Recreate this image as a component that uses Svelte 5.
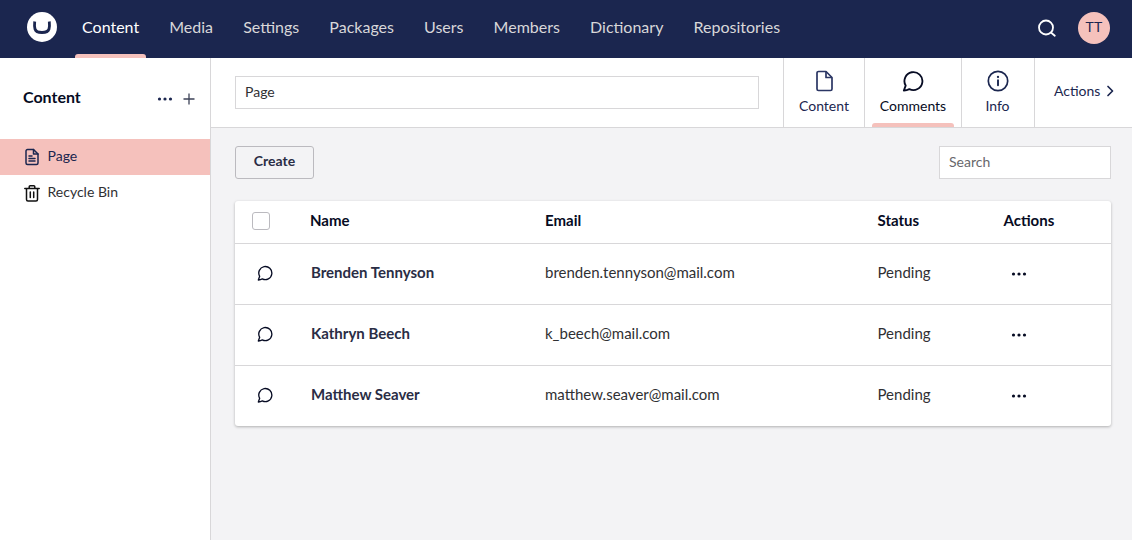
<script lang="ts">
  const navItems = ['Content', 'Media', 'Settings', 'Packages', 'Users', 'Members', 'Dictionary', 'Repositories'];
  const comments = [
    { name: 'Brenden Tennyson', email: 'brenden.tennyson@mail.com', status: 'Pending' },
    { name: 'Kathryn Beech', email: 'k_beech@mail.com', status: 'Pending' },
    { name: 'Matthew Seaver', email: 'matthew.seaver@mail.com', status: 'Pending' }
  ];
</script>

{#snippet bubble(size: number)}
  <svg width={size} height={size} viewBox="0 0 24 24" fill="none" stroke="currentColor" stroke-width="2" stroke-linecap="round" stroke-linejoin="round">
    <path d="M2 22.500l2-5.500A9.800 9.800 0 1 1 8 20.800c-1.800.8-4 1.400-6 1.700z" />
  </svg>
{/snippet}

{#snippet dots()}
  <svg width="16" height="4" viewBox="0 0 16 4" fill="currentColor">
    <circle cx="2.500" cy="2" r="1.600" /><circle cx="8" cy="2" r="1.600" /><circle cx="13.500" cy="2" r="1.600" />
  </svg>
{/snippet}

<div class="app">
  <header class="topbar">
    <div class="logo">
      <svg width="30" height="30" viewBox="0 0 30 30">
        <circle cx="15" cy="15" r="15" fill="#fff" />
        <path d="M7.700 9.500c-.3 3-.3 5.500.3 7.500.7 2.500 3 3.500 7 3.500s6.300-1 7-3.500c.6-2 .6-4.500.3-7.500" fill="none" stroke="#1b264f" stroke-width="2.800" />
      </svg>
    </div>
    <nav class="mainnav">
      {#each navItems as item, i}
        <span class="navitem" class:active={i === 0}>{item}</span>
      {/each}
    </nav>
    <div class="topright">
      <svg class="search" width="20" height="20" viewBox="0 0 20 20" fill="none" stroke="#fff" stroke-width="1.800" stroke-linecap="round">
        <circle cx="9" cy="9.500" r="7" /><path d="M14.200 14.700l3.600 3" />
      </svg>
      <div class="avatar">TT</div>
    </div>
  </header>

  <div class="main">
    <aside class="sidebar">
      <div class="side-head">
        <span class="side-title">Content</span>
        <span class="side-actions">
          {@render dots()}
          <svg width="12" height="12" viewBox="0 0 12 12" stroke="#3c4257" stroke-width="1.300"><path d="M6 .500v11M.500 6h11" /></svg>
        </span>
      </div>
      <div class="tree-item selected">
        <svg width="18" height="18" viewBox="0 0 18 18" fill="none" stroke="#1b264f" stroke-width="1.500" stroke-linejoin="round" stroke-linecap="round">
          <path d="M3 3a1.500 1.500 0 0 1 1.500-1.500h6L15 6v9a1.500 1.500 0 0 1-1.500 1.500h-9A1.500 1.500 0 0 1 3 15z" />
          <path d="M10.500 1.500V6H15M6 8h3M6 10.500h6M6 13h6" />
        </svg>
        <span>Page</span>
      </div>
      <div class="tree-item">
        <svg width="18" height="18" viewBox="0 0 18 18" fill="none" stroke="#111" stroke-width="1.500" stroke-linejoin="round" stroke-linecap="round">
          <path d="M1.800 4.500h14.400M6.200 4.500V2.700a1 1 0 0 1 1-1h3.600a1 1 0 0 1 1 1v1.800M3.500 4.500v11a1.500 1.500 0 0 0 1.500 1.500h8a1.500 1.500 0 0 0 1.500-1.500v-11M7.300 8v5.500M10.700 8v5.500" />
        </svg>
        <span>Recycle Bin</span>
      </div>
    </aside>

    <section class="workspace">
      <div class="ws-head">
        <div class="name-wrap"><input class="name-input" value="Page" /></div>
        <div class="tab content-tab">
          <svg width="22" height="22" viewBox="0 0 22 22" fill="none" stroke="#2b3664" stroke-width="1.700" stroke-linejoin="round">
            <path d="M4 3a1.500 1.500 0 0 1 1.500-1.500h7.500L19 7.500V19a1.500 1.500 0 0 1-1.500 1.500h-12A1.500 1.500 0 0 1 4 19z" />
            <path d="M13 1.500v6h6" />
          </svg>
          <span>Content</span>
        </div>
        <div class="tab comments-tab active">
          <span class="tab-icon">{@render bubble(22)}</span>
          <span>Comments</span>
        </div>
        <div class="tab info-tab">
          <svg width="22" height="22" viewBox="0 0 22 22" fill="none" stroke="#1b264f" stroke-width="1.700" stroke-linecap="round">
            <circle cx="11" cy="11" r="9.700" /><path d="M11 10.200v5" stroke-width="1.900" /><path d="M11 6.800v.3" stroke-width="2.200" />
          </svg>
          <span>Info</span>
        </div>
        <div class="tab actions-tab">
          <span>Actions</span>
          <svg width="8" height="12" viewBox="0 0 8 12" fill="none" stroke="#1b264f" stroke-width="1.700" stroke-linecap="round" stroke-linejoin="round"><path d="M2 1.500l4.500 4.500L2 10.500" /></svg>
        </div>
      </div>

      <div class="ws-body">
        <div class="toolbar">
          <button class="create">Create</button>
          <input class="search-input" placeholder="Search" />
        </div>

        <div class="table">
          <div class="row head">
            <div class="c-check"><span class="checkbox"></span></div>
            <div class="c-name">Name</div>
            <div class="c-email">Email</div>
            <div class="c-status">Status</div>
            <div class="c-actions">Actions</div>
          </div>
          {#each comments as c}
            <div class="row">
              <div class="c-check icon">{@render bubble(16)}</div>
              <div class="c-name strong">{c.name}</div>
              <div class="c-email">{c.email}</div>
              <div class="c-status">{c.status}</div>
              <div class="c-actions more">{@render dots()}</div>
            </div>
          {/each}
        </div>
      </div>
    </section>
  </div>
</div>

<style>
  :global(body) { margin: 0; background: #fff; }
  .app {
    width: 1132px; height: 540px; overflow: hidden; display: flex; flex-direction: column;
    font-family: Lato, "Liberation Sans", sans-serif; font-size: 15px; color: #1b264f;
  }

  .topbar { height: 58px; flex: none; background: #1b264f; display: flex; align-items: center; }
  .logo { width: 30px; height: 30px; margin: 0 0 4px 27px; flex: none; }
  .logo svg { display: block; }
  .mainnav { display: flex; height: 100%; margin-left: 10px; }
  .navitem {
    position: relative; padding: 0 15.05px; font-size: 16px; line-height: 53px; color: #d8d7d9;
  }
  .navitem.active { color: #fff; }
  .navitem.active::after {
    content: ''; position: absolute; left: 8px; right: 8px; bottom: 0; height: 4px;
    background: #f5c1bc; border-radius: 3px 3px 0 0;
  }
  .topright { margin-left: auto; display: flex; align-items: center; gap: 21px; padding: 0 22px 2px 0; }
  .search { display: block; }
  .avatar {
    width: 32px; height: 32px; border-radius: 50%; background: #f5c1bc; color: #1b264f;
    font-size: 14px; font-weight: 400; letter-spacing: .3px; text-align: center; line-height: 30px;
  }

  .main { flex: 1; display: flex; min-height: 0; }
  .sidebar { width: 210px; flex: none; background: #fff; border-right: 1px solid #d8d7d9; }
  .side-head { height: 81px; display: flex; align-items: center; justify-content: space-between; padding: 0 15px 0 23px; }
  .side-title { font-size: 16px; font-weight: 700; color: #060b23; padding-bottom: 5px; }
  .side-actions { display: flex; align-items: center; gap: 10px; color: #1b264f; padding-top: 1px; }
  .side-actions svg { display: block; }
  .tree-item {
    height: 36px; display: flex; align-items: center; gap: 6.500px; padding-left: 23px;
    font-size: 14px; color: #303033;
  }
  .tree-item span { padding-bottom: 4px; }
  .tree-item.selected { background: #f5c1bc; color: #1b264f; }

  .workspace { flex: 1; display: flex; flex-direction: column; min-width: 0; background: #f3f3f5; }
  .ws-head { height: 70px; box-sizing: border-box; flex: none; display: flex; background: #fff; border-bottom: 1px solid #d8d7d9; }
  .name-wrap { flex: 1; display: flex; align-items: center; padding: 0 24px; }
  .name-input {
    width: 100%; height: 33px; box-sizing: border-box; padding: 0 9px 3px;
    border: 1px solid #d8d7d9; font: 14px Lato, sans-serif; color: #303033; outline: none;
  }
  .tab {
    position: relative; box-sizing: border-box; display: flex; flex-direction: column; align-items: center;
    border-left: 1px solid #d8d7d9; font-size: 14px; color: #1b264f; padding-top: 12px; gap: 5px;
  }
  .tab svg { display: block; }
  .content-tab { width: 81px; }
  .comments-tab { width: 97px; color: #060b23; }
  .tab-icon { display: block; height: 22px; color: #060b23; }
  .comments-tab.active::after {
    content: ''; position: absolute; left: 7px; right: 7px; bottom: 0; height: 4px;
    background: #f5c1bc; border-radius: 3px 3px 0 0;
  }
  .info-tab { width: 73px; padding-right: 1px; }
  .actions-tab {
    width: 98px; flex-direction: row; justify-content: flex-start; gap: 6px;
    padding: 0 0 4px 19px; align-items: center;
  }

  .ws-body { flex: 1; padding: 18px 21px 0 24px; }
  .toolbar { display: flex; justify-content: space-between; height: 33px; margin-bottom: 22px; }
  .create {
    width: 79px; height: 33px; box-sizing: border-box; padding: 0 0 5px; background: #f3f3f5;
    border: 1px solid #bbbabf; border-radius: 3px; font: 700 14px Lato, sans-serif; color: #2a2d45;
  }
  .search-input {
    width: 172px; height: 33px; box-sizing: border-box; padding: 0 9px 2px; border: 1px solid #d8d7d9;
    background: #fff; font: 14px Lato, sans-serif; color: #303033; outline: none;
  }
  .search-input::placeholder { color: #68676b; opacity: 1; }

  .table { background: #fff; border-radius: 3px; box-shadow: 0 1px 3px rgba(0,0,0,.28); }
  .row {
    height: 61px; box-sizing: border-box; display: flex; align-items: center;
    border-bottom: 1px solid #d8d7d9; font-size: 15px; color: #303033;
  }
  .row > div { padding-bottom: 4px; }
  .row > .c-check, .row > .more { padding-bottom: 2px; }
  .row:last-child { border-bottom: 0; height: 60px; }
  .row.head { height: 43px; font-weight: 700; color: #060b23; }
  .c-check { width: 75px; padding-left: 17px; box-sizing: border-box; }
  .c-check.icon { padding-left: 21.500px; color: #060b23; line-height: 0; }
  .checkbox {
    display: block; width: 18px; height: 18px; box-sizing: border-box; background: #fff;
    border: 1px solid #bbbabf; border-radius: 3px;
  }
  .c-name { width: 235px; }
  .row:not(.head) .c-name { padding-left: 1px; margin-right: -1px; }
  .strong { font-weight: 700; color: #2a2d45; }
  .c-email { width: 332.500px; }
  .c-status { width: 126px; }
  .more { color: #060b23; padding-left: 7.500px; line-height: 0; }
</style>
